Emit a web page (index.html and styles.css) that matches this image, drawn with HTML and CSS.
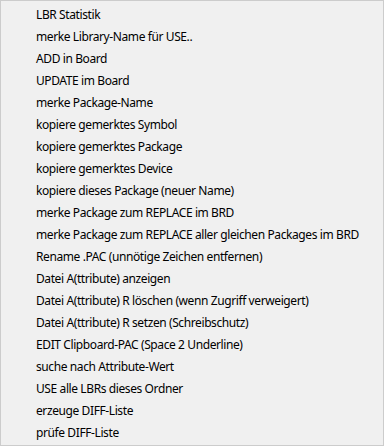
FILE: index.html
```html
<!DOCTYPE html>
<html>
<head>
<meta charset="utf-8">
<link rel="stylesheet" href="styles.css">
</head>
<body>
<ul class="menu">
  <li class="item">LBR Statistik</li>
  <li class="item">merke Library-Name für USE..</li>
  <li class="item">ADD in Board</li>
  <li class="item">UPDATE im Board</li>
  <li class="item">merke Package-Name</li>
  <li class="item">kopiere gemerktes Symbol</li>
  <li class="item">kopiere gemerktes Package</li>
  <li class="item">kopiere gemerktes Device</li>
  <li class="item">kopiere dieses Package (neuer Name)</li>
  <li class="item">merke Package zum REPLACE im BRD</li>
  <li class="item">merke Package zum REPLACE aller gleichen Packages im BRD</li>
  <li class="item">Rename .PAC (unnötige Zeichen entfernen)</li>
  <li class="item">Datei A(ttribute) anzeigen</li>
  <li class="item">Datei A(ttribute) R löschen (wenn Zugriff verweigert)</li>
  <li class="item">Datei A(ttribute) R setzen (Schreibschutz)</li>
  <li class="item">EDIT Clipboard-PAC (Space 2 Underline)</li>
  <li class="item">suche nach Attribute-Wert</li>
  <li class="item">USE alle LBRs dieses Ordner</li>
  <li class="item">erzeuge DIFF-Liste</li>
  <li class="item">prüfe DIFF-Liste</li>
</ul>
</body>
</html>
```

FILE: styles.css
```css
html, body {
  margin: 0;
  padding: 0;
  background: #f0f0f0;
}
.menu {
  box-sizing: border-box;
  width: 384px;
  height: 446px;
  margin: 0;
  padding: 3px 0 1px 0;
  list-style: none;
  background: #f0f0f0;
  border: 1px solid #cccccc;
  font-family: "Noto Sans", "Open Sans", sans-serif;
  font-size: 12px;
  letter-spacing: -0.4px;
  color: #000;
}
.item {
  height: 22px;
  line-height: 22px;
  padding-left: 35px;
  white-space: nowrap;
}
```
